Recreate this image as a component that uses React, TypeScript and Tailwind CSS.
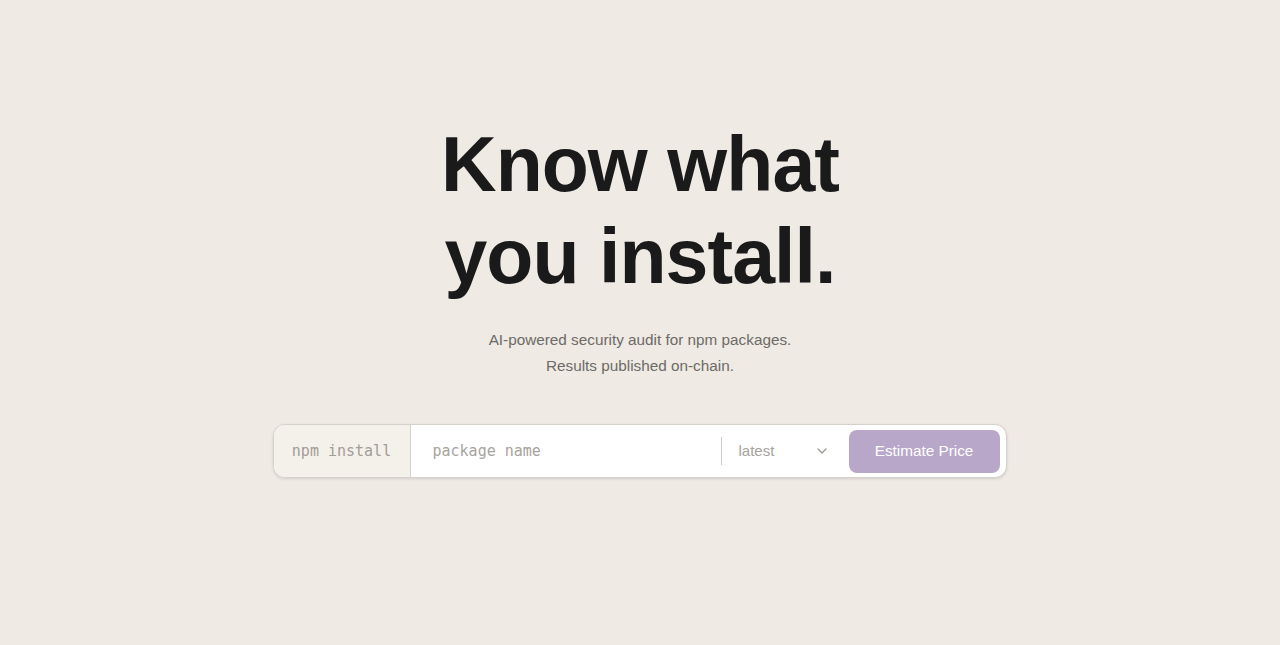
import React from "react";

const App: React.FC = () => (
  <main className="min-h-[645px] w-full bg-[#efeae4] flex flex-col items-center pt-[118px] font-['Liberation_Sans',Arial,sans-serif]">
    <h1 className="text-center text-[77px] leading-[92px] font-bold tracking-[-0.012em] text-[#1a1a1a]">
      Know what
      <br />
      you install.
    </h1>
    <p className="mt-[25px] text-center text-[15.3px] leading-[26px] text-[#6d6a67]">
      AI-powered security audit for npm packages.
      <br />
      Results published on-chain.
    </p>
    <div className="mt-[45px] ml-[-1px] flex h-[54px] w-[734px] items-stretch rounded-[12px] border border-[#d6d1ca] bg-white shadow-[0_1px_3px_rgba(0,0,0,0.12)]">
      <div className="flex w-[137px] items-center justify-center rounded-l-[11px] border-r border-[#d6d1ca] bg-[#f4f0ea] font-['DejaVu_Sans_Mono',monospace] text-[15px] text-[#a29d97]">
        npm install
      </div>
      <input
        className="w-[310px] bg-transparent px-[22px] font-['DejaVu_Sans_Mono',monospace] text-[15px] text-[#333] outline-none placeholder:text-[#a8a39d]"
        placeholder="package name"
      />
      <div className="my-[12px] w-px bg-[#cfcac4]" />
      <div className="flex w-[122px] items-center justify-between pl-[17px] pr-[14px] text-[15px] text-[#a8a39d]">
        <span>latest</span>
        <svg width="16" height="16" viewBox="0 0 24 24" fill="none" stroke="#9c978f" strokeWidth="1.8" strokeLinecap="round" strokeLinejoin="round">
          <path d="m6 9 6 6 6-6" />
        </svg>
      </div>
      <div className="flex flex-1 items-center py-[4px] pl-[5px] pr-[6px]">
        <button className="h-[43px] w-full rounded-[8px] bg-[#b8a7c9] text-[15.3px] text-white">
          Estimate Price
        </button>
      </div>
    </div>
  </main>
);

export default App;
